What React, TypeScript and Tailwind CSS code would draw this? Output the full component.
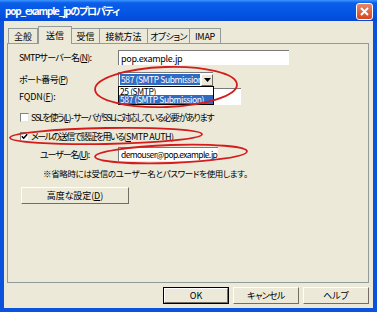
import React from "react";

const U = ({ c }: { c: string }) => <span className="underline underline-offset-[1px]">{c}</span>;

function Tab({ children, w, selected }: { children: React.ReactNode; w: string; selected?: boolean }) {
  if (selected) {
    return (
      <div className={`${w} h-[18px] -mb-px relative z-10 bg-[#ece9d8] border-t border-l border-r border-[#919b9c] flex items-center justify-center pb-[1px] whitespace-nowrap`}>
        {children}
      </div>
    );
  }
  return (
    <div className={`${w} h-[15px] border-t border-r border-[#919b9c] flex items-center justify-center whitespace-nowrap`}>
      {children}
    </div>
  );
}

function Btn({ children, def, w }: { children: React.ReactNode; def?: boolean; w: string }) {
  return (
    <div className={`${w} h-[17px] ${def ? "border border-black" : ""}`}>
      <div className="w-full h-full border-t border-l border-t-white border-l-white border-b border-r border-b-[#716f64] border-r-[#716f64] bg-[#ece9d8] flex items-center justify-center whitespace-nowrap">
        {children}
      </div>
    </div>
  );
}

function Check({ checked }: { checked?: boolean }) {
  return (
    <div className="w-[9px] h-[9px] shrink-0 bg-white border-t border-l border-t-[#808080] border-l-[#808080] border-b border-r border-b-[#e6e6e6] border-r-[#e6e6e6] flex items-center justify-center">
      {checked && (
        <svg width="7" height="7" viewBox="0 0 7 7">
          <path d="M0.8 3.2 L2.7 5.2 L6.2 1.2" fill="none" stroke="#000" strokeWidth="1.5" />
        </svg>
      )}
    </div>
  );
}

export default function App() {
  return (
    <div className="w-[377px] h-[312px] relative overflow-hidden bg-[#0b53dc] flex flex-col font-['Noto_Sans_CJK_JP',sans-serif] [font-feature-settings:'palt'] text-[9px] text-black leading-none">
      {/* title bar */}
      <div className="h-[21px] shrink-0 flex items-center justify-between pl-[5px] pr-[4px] bg-[linear-gradient(to_bottom,#3d95ff_0%,#0a5ee8_14%,#0556e6_55%,#0449d6_100%)]">
        <span className="text-white font-bold text-[10px] tracking-[-1.2px] pt-[1px] whitespace-nowrap">pop_example_jpのプロパティ</span>
        <div className="w-[17px] h-[17px] mt-[1px] rounded-[3px] border border-white bg-[linear-gradient(to_bottom,#e8856a,#d6461e)] flex items-center justify-center">
          <svg width="9" height="9" viewBox="0 0 9 9">
            <path d="M1 1 L8 8 M8 1 L1 8" stroke="#fff" strokeWidth="2" />
          </svg>
        </div>
      </div>

      {/* body */}
      <div className="flex-1 mx-[4px] mb-[4px] bg-[#ece9d8] flex flex-col pt-[5px] px-[3px]">
        {/* tabs */}
        <div className="h-[17px] flex items-end pl-[1px] relative z-10">
          <div className="border-l border-[#919b9c] h-[15px]" />
          <Tab w="w-[29px]">全般</Tab>
          <Tab w="w-[34px]" selected>送信</Tab>
          <Tab w="w-[28px]">受信</Tab>
          <Tab w="w-[48px]">接続方法</Tab>
          <Tab w="w-[42px]"><span className="tracking-[-0.6px]">オプション</span></Tab>
          <Tab w="w-[31px]"><span className="tracking-[-0.3px]">IMAP</span></Tab>
        </div>

        {/* panel */}
        <div className="w-[362px] h-[240px] border border-[#919b9c] relative flex flex-col">
          {/* row 1 */}
          <div className="mt-[6px] h-[15px] flex items-center pl-[11px]">
            <div className="w-[99px] tracking-[-0.8px] whitespace-nowrap">SMTPサーバー名(<U c="N" />):</div>
            <div className="w-[171px] h-[15px] bg-white border-t border-l border-t-[#7a7a7a] border-l-[#7a7a7a] flex items-center pl-[2px] tracking-[-0.3px]">
              pop.example.jp
            </div>
          </div>
          {/* row 2 */}
          <div className="mt-[7px] h-[14px] flex items-center pl-[11px]">
            <div className="w-[99px] tracking-[-0.7px] whitespace-nowrap">ポート番号(<U c="P" />)</div>
            <div className="w-[95px] h-[14px] bg-white border-t border-l border-t-[#7a7a7a] border-l-[#7a7a7a] flex items-center pl-[1px] gap-[1px]">
              <div className="w-[80px] h-[11px] bg-[#316ac5] text-white text-[8.5px] tracking-[-0.4px] flex items-center pl-[1px] overflow-hidden whitespace-nowrap">
                587 (SMTP Submission)
              </div>
              <div className="w-[12px] h-[12px] bg-[#ece9d8] border-t border-l border-t-white border-l-white border-b border-r border-b-[#716f64] border-r-[#716f64] flex items-center justify-center">
                <svg width="7" height="4" viewBox="0 0 7 4">
                  <path d="M0 0 L7 0 L3.5 4 Z" fill="#000" />
                </svg>
              </div>
            </div>
          </div>
          {/* row 3 */}
          <div className="mt-[2px] h-[17px] flex items-center pl-[11px]">
            <div className="w-[99px] tracking-[-0.15px] whitespace-nowrap">FQDN(<U c="F" />):</div>
            <div className="w-[123px] h-[17px] bg-white border-t border-l border-t-[#7a7a7a] border-l-[#7a7a7a]" />
          </div>
          {/* SSL row */}
          <div className="mt-[7px] h-[10px] flex items-center pl-[12px] gap-[2px]">
            <Check />
            <div className="tracking-[-1.35px] whitespace-nowrap">SSLを使う(<U c="L" />) - サーバがSSLに対応している必要があります</div>
          </div>
          {/* AUTH row */}
          <div className="mt-[9px] h-[10px] flex items-center pl-[12px] gap-[2px]">
            <Check checked />
            <div className="whitespace-nowrap">
              <span className="tracking-[-1.5px]">メールの送信で認証を用いる</span>
              <span className="tracking-[-0.5px]">(<U c="S" />MTP AUTH)</span>
            </div>
          </div>
          {/* user row */}
          <div className="mt-[6px] h-[14px] flex items-center pl-[32px]">
            <div className="w-[78px] tracking-[-1.1px] whitespace-nowrap">ユーザー名(<U c="U" />):</div>
            <div className="w-[100px] h-[14px] bg-white border-t border-l border-t-[#7a7a7a] border-l-[#7a7a7a] flex items-center pl-[2px] text-[8.5px] tracking-[-0.6px] whitespace-nowrap overflow-hidden">
              demouser@pop.example.jp
            </div>
          </div>
          {/* note */}
          <div className="mt-[6px] h-[12px] flex items-center pl-[35px] text-[8.5px] tracking-[-0.35px] whitespace-nowrap">
            ※省略時には受信のユーザー名とパスワードを使用します。
          </div>
          {/* advanced button */}
          <div className="mt-[8px] pl-[13px]">
            <Btn w="w-[108px]">
              <span className="tracking-[-0.1px]">高度な設定(<U c="D" />)</span>
            </Btn>
          </div>

          {/* open dropdown list */}
          <div className="absolute left-[110px] top-[42px] w-[96px] h-[19px] bg-white border border-black flex flex-col text-[8.5px] tracking-[-0.4px] whitespace-nowrap overflow-hidden">
            <div className="h-[8px] flex items-center pl-[1px]">25 (SMTP)</div>
            <div className="h-[9px] flex items-center pl-[1px] bg-[#316ac5] text-white">587 (SMTP Submission)</div>
          </div>
        </div>

        {/* bottom buttons */}
        <div className="mt-[4px] flex justify-end gap-[4px] pr-[1px]">
          <Btn def w="w-[66px]">OK</Btn>
          <Btn w="w-[66px]"><span className="tracking-[-0.6px]">キャンセル</span></Btn>
          <Btn w="w-[66px]">ヘルプ</Btn>
        </div>
      </div>

      {/* red annotation ellipses */}
      <svg className="absolute left-0 top-0 pointer-events-none" width="377" height="312" viewBox="0 0 377 312">
        <ellipse cx="166" cy="87" rx="71" ry="20" fill="none" stroke="#d41c1c" strokeWidth="1.8" transform="rotate(-2 166 87)" />
        <ellipse cx="106" cy="136" rx="96" ry="8" fill="none" stroke="#d41c1c" strokeWidth="1.8" transform="rotate(-1 106 136)" />
        <ellipse cx="171" cy="154" rx="76" ry="9" fill="none" stroke="#d41c1c" strokeWidth="1.8" transform="rotate(-2 171 154)" />
      </svg>
    </div>
  );
}
